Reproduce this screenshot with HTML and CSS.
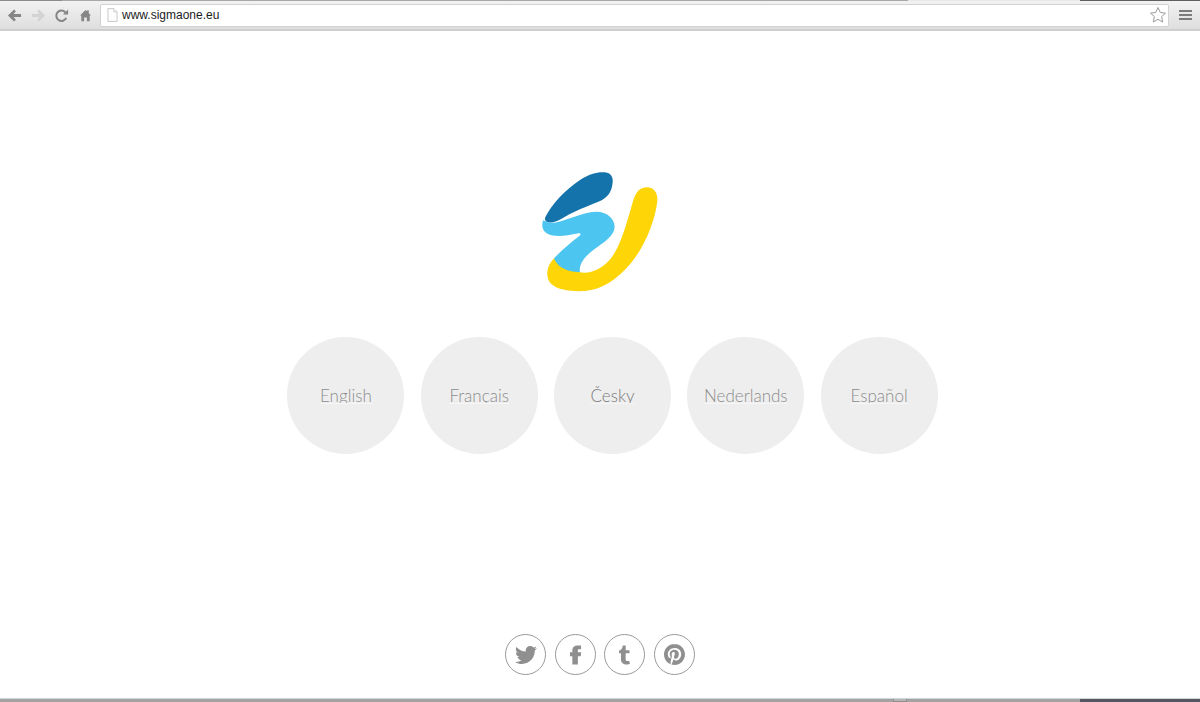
FILE: index.html
```html
<!DOCTYPE html>
<html lang="en">
<head>
<meta charset="utf-8">
<title>www.sigmaone.eu</title>
<link rel="stylesheet" href="styles.css">
</head>
<body>
<div class="window">
  <div class="topstrip"><span class="strip-a"></span><span class="strip-b"></span><span class="strip-c"></span><span class="strip-d"></span></div>
  <header class="toolbar">
    <nav class="navicons">
      <svg class="nav" viewBox="0 0 16 16"><path class="ic-dark" d="M1 8l6.500-6.500 2 2L7 6.300h8v3.400H7l2.500 2.800-2 2z"/></svg>
      <svg class="nav" viewBox="0 0 16 16"><path class="ic-light" d="M15 8L8.500 1.500l-2 2L9 6.300H1v3.400h8l-2.500 2.800 2 2z"/></svg>
      <svg class="nav" viewBox="0 0 16 16"><path class="ic-stroke" d="M13 10.500A5.500 5.500 0 1 1 12 4.500"/><path class="ic-dark" d="M9.500 7H15V1.500z"/></svg>
      <svg class="nav" viewBox="0 0 16 16"><path class="ic-dark" d="M8 2l1.800 1.800V2.500h1.700v3L13.800 8H12.500v6H9.500v-4h-3v4h-3V8H2.200z"/></svg>
    </nav>
    <div class="omnibox">
      <svg class="pageicon" viewBox="0 0 12 15"><path class="page" d="M1 .5h6.500L11 4v10.500H1z"/><path class="page" d="M7.500.5V4H11"/></svg>
      <span class="url">www.sigmaone.eu</span>
      <svg class="star" viewBox="0 0 18 18"><path class="star-path" d="M9 1.500l2.300 5 5.200.6-3.900 3.500 1.100 5.400L9 13.300 4.300 16l1.100-5.400L1.500 7.100l5.200-.6z"/></svg>
    </div>
    <div class="menu"><span></span><span></span><span></span></div>
  </header>
  <main class="page-body">
    <svg class="logo" viewBox="0 0 420 390" role="img" aria-label="Sigma One">
      <path class="y" d="M52 322C54 302 62 290 74 278L150 322C185 328 225 308 250 270C280 220 292 165 310 105C320 75 335 66 352 67C372 68 384 84 382 108C376 165 345 245 300 298C260 345 215 374 165 378C125 380 85 376 65 358C55 349 51 336 52 322Z"/>
      <path class="l" d="M40 165C34 178 36 194 48 203C65 215 95 216 146 205C152 204 154 209 148 213C125 231 95 255 72 280C82 305 105 320 150 322C146 300 160 278 190 255C220 232 252 215 254 186C254 160 230 140 200 140C165 140 110 165 80 172C62 176 50 172 40 165Z"/>
      <path class="d" d="M45 158C65 118 105 75 150 45C180 25 205 20 225 22C242 24 250 36 248 52C246 78 235 95 215 106C190 118 150 130 100 158C80 170 62 176 50 170C46 167 44 162 45 158Z"/>
    </svg>
    <ul class="languages">
      <li class="lang"><a class="lang-label" href="#">English</a></li>
      <li class="lang"><a class="lang-label" href="#">Français</a></li>
      <li class="lang"><a class="lang-label lang-dark" href="#">Česky</a></li>
      <li class="lang"><a class="lang-label" href="#">Nederlands</a></li>
      <li class="lang"><a class="lang-label" href="#">Español</a></li>
    </ul>
    <div class="social">
      <a class="soc" href="#" aria-label="Twitter"><svg class="tw" viewBox="0 0 24 24"><path d="M23.954 4.569c-.885.389-1.83.654-2.825.775 1.014-.611 1.794-1.574 2.163-2.723-.951.555-2.005.959-3.127 1.184-.896-.959-2.173-1.559-3.591-1.559-2.717 0-4.92 2.203-4.92 4.917 0 .39.045.765.127 1.124C7.691 8.094 4.066 6.13 1.64 3.161c-.427.722-.666 1.561-.666 2.475 0 1.71.87 3.213 2.188 4.096-.807-.026-1.566-.248-2.228-.616v.061c0 2.385 1.693 4.374 3.946 4.827-.413.111-.849.171-1.296.171-.314 0-.615-.03-.916-.086.631 1.953 2.445 3.377 4.604 3.417-1.68 1.319-3.809 2.105-6.102 2.105-.39 0-.779-.023-1.17-.067 2.189 1.394 4.768 2.209 7.557 2.209 9.054 0 13.999-7.496 13.999-13.986 0-.209 0-.42-.015-.63.961-.689 1.8-1.56 2.46-2.548l-.047-.02z"/></svg></a>
      <a class="soc" href="#" aria-label="Facebook"><svg class="fb" viewBox="0 0 24 24"><path d="M15 8.500V6.300c0-1 .5-1.500 1.500-1.500H19V0h-4C10.500 0 8 2.500 8 6.200v2.300H5V13.500h3V24h7V13.500h3.600l.6-5z"/></svg></a>
      <a class="soc" href="#" aria-label="Tumblr"><svg class="tb" viewBox="0 0 24 24"><path d="M14.563 24c-5.093 0-7.031-3.756-7.031-6.411V9.747H5.116V6.648c3.63-1.313 4.512-4.596 4.71-6.469C9.84.051 9.941 0 9.999 0h3.517v6.114h4.801v3.633h-4.82v7.47c.016 1.001.375 2.371 2.207 2.371h.09c.631-.02 1.486-.205 1.936-.419l1.156 3.425c-.436.636-2.4 1.374-4.156 1.404h-.178l.011.002z"/></svg></a>
      <a class="soc" href="#" aria-label="Pinterest"><svg class="pn" viewBox="0 0 24 24"><path d="M12.017 0C5.396 0 .029 5.367.029 11.987c0 5.079 3.158 9.417 7.618 11.162-.105-.949-.199-2.403.041-3.439.219-.937 1.406-5.957 1.406-5.957s-.359-.72-.359-1.781c0-1.663.967-2.911 2.168-2.911 1.024 0 1.518.769 1.518 1.688 0 1.029-.653 2.567-.992 3.992-.285 1.193.6 2.165 1.775 2.165 2.128 0 3.768-2.245 3.768-5.487 0-2.861-2.063-4.869-5.008-4.869-3.41 0-5.409 2.562-5.409 5.199 0 1.033.394 2.143.889 2.741.099.12.112.225.085.345-.09.375-.293 1.199-.334 1.363-.053.225-.172.271-.401.165-1.495-.69-2.433-2.878-2.433-4.646 0-3.776 2.748-7.252 7.92-7.252 4.158 0 7.392 2.967 7.392 6.923 0 4.135-2.607 7.462-6.233 7.462-1.214 0-2.354-.629-2.758-1.379l-.749 2.848c-.269 1.045-1.004 2.352-1.498 3.146 1.123.345 2.306.535 3.55.535 6.607 0 11.985-5.365 11.985-11.987C23.97 5.39 18.592.026 11.985.026L12.017 0z"/></svg></a>
    </div>
  </main>
  <footer class="bottomedge"><span class="be-a"></span><span class="be-tab"></span><span class="be-b"></span><span class="be-c"></span></footer>
</div>
</body>
</html>
```
FILE: styles.css
```css
* { box-sizing: border-box; }
html, body { margin: 0; padding: 0; height: 100%; background: #fff; overflow: hidden; }
.window { width: 1200px; height: 702px; display: flex; flex-direction: column; font-family: "Liberation Sans", Arial, sans-serif; }

.topstrip { display: flex; height: 1px; flex: none; }
.strip-a { width: 62px; background: #8d8d8d; }
.strip-b { width: 846px; background: #a9a9a9; }
.strip-c { width: 172px; background: #e9e9e9; }
.strip-d { flex: 1; background: #5f5f5f; }

.toolbar { flex: none; height: 30px; display: flex; align-items: center; background: linear-gradient(#f2f2f2, #dedede); border-bottom: 2px solid #cfcfcf; padding: 0 5px 0 7px; }
.navicons { display: flex; align-items: center; gap: 8.500px; width: 93px; flex: none; }
.nav { width: 15px; height: 15px; flex: none; }
.ic-dark { fill: #858585; }
.ic-light { fill: #d3d3d3; }
.ic-stroke { fill: none; stroke: #858585; stroke-width: 2.200; }

.omnibox { flex: none; width: 1069px; height: 23px; background: #fff; border: 1px solid #d2d2d2; border-radius: 2px; display: flex; align-items: center; padding: 0 1px 0 6px; }
.pageicon { width: 11px; height: 14px; flex: none; margin-right: 4px; }
.page { fill: #fdfdfd; stroke: #c4c4c4; stroke-width: 1; }
.url { flex: 1; font-size: 12px; color: #1c1c1c; letter-spacing: 0; }
.star { width: 18px; height: 18px; flex: none; }
.star-path { fill: #fff; stroke: #9b9b9b; stroke-width: 1; }

.menu { flex: none; margin-left: 10px; width: 13px; display: flex; flex-direction: column; gap: 2px; }
.menu span { display: block; height: 2px; background: #7c7c7c; }

.page-body { flex: 1; display: flex; flex-direction: column; align-items: center; background: #fff; min-height: 0; }
.logo { width: 140px; height: 130px; flex: none; margin-top: 134px; }
.y { fill: #fed506; }
.l { fill: #4cc6f0; }
.d { fill: #1573ab; }

.languages { list-style: none; margin: 42px 0 0 25px; padding: 0; display: flex; gap: 16.300px; }
.lang { width: 117px; height: 117px; border-radius: 50%; background: #eeeeee; display: flex; align-items: center; justify-content: center; }
.lang-label { display: block; height: 18px; margin-bottom: 1px; overflow: hidden; font-family: Lato, sans-serif; font-weight: 300; font-size: 17px; line-height: 19px; color: #8c8c8c; text-decoration: none; border-bottom: 1px solid #f6f6f6; }
.lang-dark { color: #7a7a7a; }

.social { display: flex; gap: 8.500px; margin-top: 180px; }
.soc { width: 41px; height: 41px; border: 1.500px solid #9a9a9a; border-radius: 50%; display: flex; align-items: center; justify-content: center; }
.soc svg { fill: #8f8f8f; display: block; }
.tw { width: 22px; height: 22px; }
.fb { width: 19px; height: 20px; }
.tb { width: 19px; height: 20px; }
.pn { width: 21px; height: 21px; }

.bottomedge { flex: none; height: 4px; display: flex; background: #a3a3a3; border-top: 1px solid #d7d7d7; }
.be-a { width: 893px; }
.be-tab { width: 14px; border: 1px solid #8f8f8f; border-top: none; background: #b5b5b5; height: 3px; }
.be-b { width: 173px; }
.be-c { flex: 1; background: #55555f; }
```
